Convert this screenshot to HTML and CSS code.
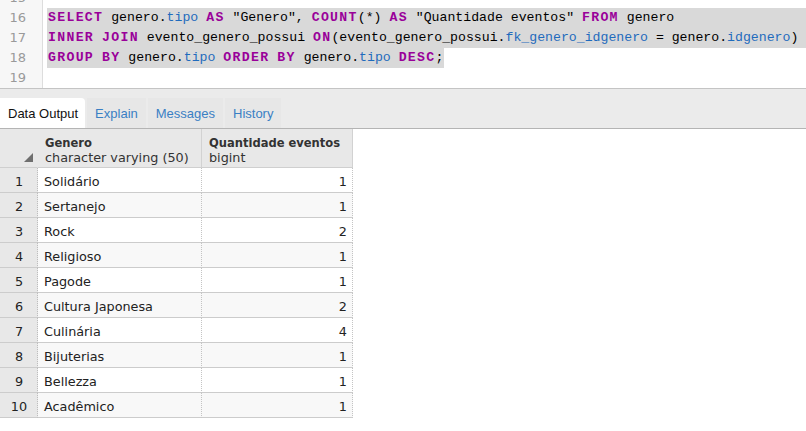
FILE: index.html
```html
<!DOCTYPE html>
<html>
<head>
<meta charset="utf-8">
<link rel="stylesheet" href="styles.css">
</head>
<body>
<div class="editor">
  <div class="scroll">
    <div class="gutter">
      <div class="ln">15</div>
      <div class="ln">16</div>
      <div class="ln">17</div>
      <div class="ln">18</div>
      <div class="ln">19</div>
    </div>
    <div class="code">
      <div class="line"></div>
      <div class="line sel-full"><span class="kw">SELECT</span> genero.<span class="prop">tipo</span> <span class="kw">AS</span> "Genero", <span class="kw">COUNT</span>(*) <span class="kw">AS</span> "Quantidade eventos" <span class="kw">FROM</span> genero</div>
      <div class="line sel-full"><span class="kw">INNER</span> <span class="kw">JOIN</span> evento_genero_possui <span class="kw">ON</span>(evento_genero_possui.<span class="prop">fk_genero_idgenero</span> = genero.<span class="prop">idgenero</span>)</div>
      <div class="line"><span class="sel"><span class="kw">GROUP</span> <span class="kw">BY</span> genero.<span class="prop">tipo</span> <span class="kw">ORDER</span> <span class="kw">BY</span> genero.<span class="prop">tipo</span> <span class="kw">DESC</span>;</span></div>
      <div class="line"></div>
    </div>
  </div>
</div>
<div class="tabbar">
  <div class="tab active">Data Output</div>
  <div class="tab">Explain</div>
  <div class="tab">Messages</div>
  <div class="tab">History</div>
</div>
<div class="grid">
  <div class="hcell corner"><svg width="9" height="9" viewBox="0 0 9 9"><polygon points="9,0 9,9 0,9" fill="#6f6f6f"/></svg></div>
  <div class="hcell"><b>Genero</b><span>character varying (50)</span></div>
  <div class="hcell"><b>Quantidade eventos</b><span>bigint</span></div>

  <div class="rn">1</div><div class="c">Solidário</div><div class="c n">1</div>
  <div class="rn">2</div><div class="c alt">Sertanejo</div><div class="c n alt">1</div>
  <div class="rn">3</div><div class="c">Rock</div><div class="c n">2</div>
  <div class="rn">4</div><div class="c alt">Religioso</div><div class="c n alt">1</div>
  <div class="rn">5</div><div class="c">Pagode</div><div class="c n">1</div>
  <div class="rn">6</div><div class="c alt">Cultura Japonesa</div><div class="c n alt">2</div>
  <div class="rn">7</div><div class="c">Culinária</div><div class="c n">4</div>
  <div class="rn">8</div><div class="c alt">Bijuterias</div><div class="c n alt">1</div>
  <div class="rn">9</div><div class="c">Bellezza</div><div class="c n">1</div>
  <div class="rn">10</div><div class="c alt">Acadêmico</div><div class="c n alt">1</div>
</div>
</body>
</html>
```
FILE: styles.css
```css
html, body {
  margin: 0;
  padding: 0;
  background: #ffffff;
}
body {
  width: 806px;
  height: 431px;
  overflow: hidden;
}
.editor {
  height: 88px;
  overflow: hidden;
  border-bottom: 1px solid #c4c4c4;
  background: #fff;
}
.scroll {
  display: flex;
  margin-top: -12px;
}
.gutter {
  width: 43px;
  flex: none;
  background: #f7f7f7;
  border-right: 1px solid #dddddd;
  box-sizing: border-box;
  height: 112px;
}
.ln {
  height: 20px;
  line-height: 20px;
  text-align: right;
  padding-right: 16px;
  font-family: "DejaVu Sans", sans-serif;
  font-size: 13px;
  color: #9a9a9a;
}
.code {
  flex: 1;
  padding-left: 4px;
  font-family: "Liberation Mono", monospace;
  font-size: 13.2px;
  color: #000;
}
.line {
  height: 20px;
  line-height: 20px;
  white-space: pre;
  padding-left: 1px;
}
.sel-full {
  background: #d9d9d9;
}
.sel {
  background: #d9d9d9;
  display: inline-block;
  height: 20px;
  margin-left: -1px;
  padding-left: 1px;
  padding-right: 1px;
}
.kw {
  color: #990099;
  font-weight: bold;
  letter-spacing: 1.3px;
}
.prop {
  color: #1f6bbd;
}
.tabbar {
  height: 39px;
  background: #ebebeb;
  border-bottom: 1px solid #b4b4b4;
  display: flex;
  align-items: flex-end;
  gap: 2px;
}
.tab {
  height: 30px;
  line-height: 31px;
  padding: 0 8px;
  white-space: nowrap;
  font-family: "Liberation Sans", Arial, sans-serif;
  font-size: 13px;
  color: #3a7fc4;
  background: #e7e7e7;
}
.tab.active {
  background: #ffffff;
  color: #111;
  border-top-right-radius: 4px;
  padding: 0 7px 0 8px;
}
.grid {
  display: grid;
  grid-template-columns: 38px 164px 151px;
  grid-template-rows: 39px repeat(10, 25px);
  width: 353px;
  font-family: "DejaVu Sans", sans-serif;
  font-size: 12.8px;
  color: #222;
}
.hcell {
  background: #e8e8e8;
  border-bottom: 1px solid #cfcfcf;
  border-right: 1px solid #d2d2d2;
  box-sizing: border-box;
  display: flex;
  flex-direction: column;
  justify-content: center;
  padding: 3px 0 0 7px;
  line-height: 15px;
  color: #333;
  white-space: nowrap;
}
.hcell b {
  font-family: "DejaVu Sans Condensed", "DejaVu Sans", sans-serif;
  font-stretch: condensed;
  font-weight: bold;
  color: #333;
}
.hcell.corner {
  padding: 0 4px 5px 0;
  flex-direction: row;
  align-items: flex-end;
  justify-content: flex-end;
  border-right: 1px solid #e8e8e8;
}
.rn {
  background: #e8e8e8;
  border-bottom: 1px solid #cccccc;
  border-right: 1px dotted #bdbdbd;
  box-sizing: border-box;
  display: flex;
  align-items: center;
  justify-content: center;
  padding: 2px 0 0 1px;
}
.c {
  background: #ffffff;
  border-bottom: 1px solid #cccccc;
  border-right: 1px dotted #c4c4c4;
  box-sizing: border-box;
  display: flex;
  align-items: center;
  padding: 2px 0 0 6px;
  white-space: nowrap;
}
.c.alt {
  background: #f8f8f8;
}
.c.n {
  justify-content: flex-end;
  padding-right: 5px;
}
```
